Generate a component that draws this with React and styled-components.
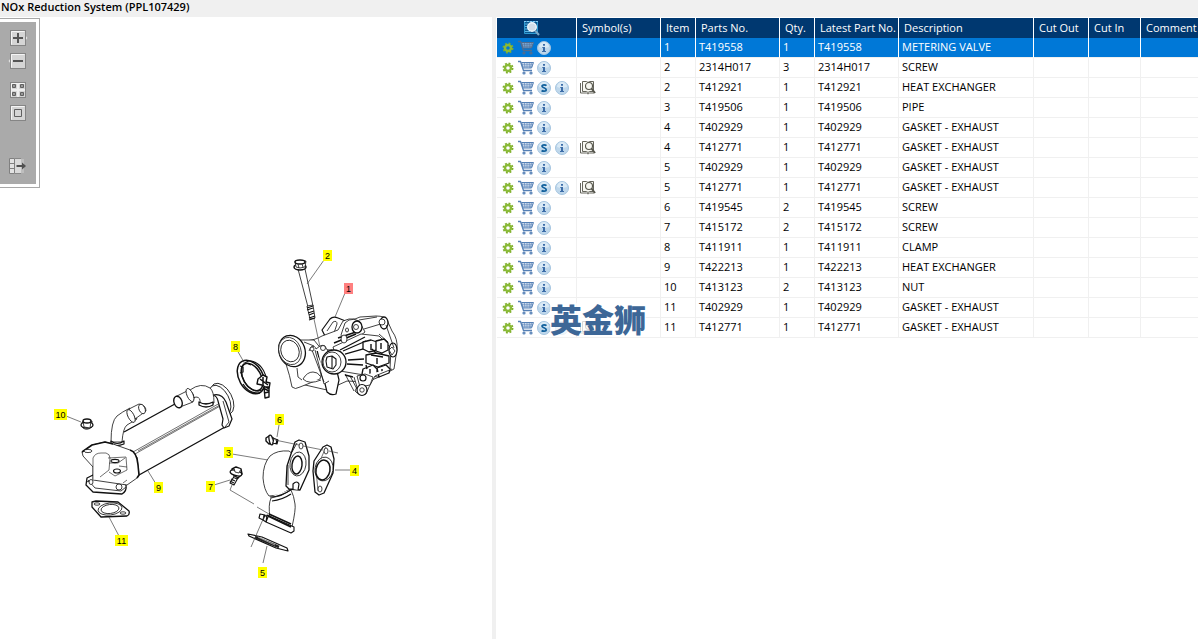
import React from 'react';
import styled, { createGlobalStyle } from 'styled-components';

const GlobalStyle = createGlobalStyle`
  * {
    box-sizing: border-box;
  }
  body {
    margin: 0;
    background: #fff;
    color: #000;
    font-family: 'Open Sans', 'Noto Sans', sans-serif;
    font-size: 11px;
  }
`;

const Page = styled.div`
  display: flex;
  flex-direction: column;
  height: 100vh;
  overflow: hidden;
`;
const TitleBar = styled.h1`
  flex: none;
  margin: 0;
  padding: 0 1px;
  height: 17px;
  line-height: 14px;
  font-size: 11px;
  font-weight: 600;
  background: #f0f0f0;
`;
const Panes = styled.main`
  display: flex;
  flex: 1;
  min-height: 0;
`;
const DrawingPane = styled.section`
  display: flex;
  align-items: flex-start;
  flex: 0 0 496px;
  border-right: 4px solid #f0f0f0;
`;
const Toolbar = styled.div`
  display: flex;
  flex-direction: column;
  flex: none;
  align-items: center;
  width: 40px;
  height: 170px;
  margin-top: 1px;
  padding: 6px 4px 0 0;
  background: #aaa;
  border: 1px solid #a8a8a8;
  border-left: 0;
  box-shadow: inset 0 3px #fff, inset -3px 0 #fff, inset 0 -3px #fff;
`;
const ToolButton = styled.button`
  display: block;
  width: 20px;
  height: 20px;
  margin: ${p => p.$gap || 3}px 0 0;
  padding: 0;
  border: 0;
  background: none;
  cursor: pointer;

  svg {
    display: block;
  }
`;
const Drawing = styled.svg`
  flex: none;
  width: 452px;
  height: 600px;
  font-family: 'Liberation Sans', Arial, sans-serif;
  font-size: 9px;
`;
const TablePane = styled.section`
  position: relative;
  flex: 1;
  min-width: 0;
  overflow: hidden;
  padding-left: 1px;
`;
const PartsTable = styled.table`
  width: 100%;
  min-width: 706px;
  margin-top: 1px;
  table-layout: fixed;
  border-collapse: separate;
  border-spacing: 0;
`;
const Col = styled.col`
  width: ${p => (p.$width ? `${p.$width}px` : 'auto')};
`;
const HeadCell = styled.th`
  height: 20px;
  padding: 0 0 1px 5px;
  border-right: 1px solid #fff;
  background: #003870;
  color: #fff;
  font-weight: 400;
  line-height: 18px;
  text-align: left;
  white-space: nowrap;

  svg {
    display: block;
    margin-left: 22px;
  }
`;
const Row = styled.tr`
  background: ${p => (p.$selected ? '#0078d7' : '#fff')};
  color: ${p => (p.$selected ? '#fff' : '#000')};
`;
const Cell = styled.td`
  height: 20px;
  padding: 0 0 2px 3px;
  border-right: 1px solid ${p => (p.$selected ? '#fff' : '#f0f0f0')};
  border-bottom: 1px solid #f0f0f0;
  line-height: 17px;
  white-space: nowrap;
`;
const IconCell = styled(Cell)`
  padding-bottom: 0;
`;
const IconRow = styled.div`
  display: flex;
  align-items: center;
  gap: 2px;
  height: 19px;
`;
const IconButton = styled.button`
  display: flex;
  align-items: center;
  justify-content: center;
  width: 16px;
  height: 16px;
  padding: 0;
  border: 0;
  background: none;
  cursor: pointer;
`;
const Watermark = styled.div`
  position: absolute;
  left: 54px;
  top: 286px;
  height: 32px;
  background: rgba(255, 255, 255, 0.75);
  color: #3d6797;
  font-family: 'Noto Sans CJK SC', sans-serif;
  font-size: 32px;
  font-weight: 900;
  line-height: 30px;
`;

const columns = [
  { label: '', width: 80 },
  { label: 'Symbol(s)', width: 84 },
  { label: 'Item', width: 35 },
  { label: 'Parts No.', width: 84 },
  { label: 'Qty.', width: 35 },
  { label: 'Latest Part No.', width: 84 },
  { label: 'Description', width: 135 },
  { label: 'Cut Out', width: 55 },
  { label: 'Cut In', width: 52 },
  { label: 'Comment' },
];

const parts = [
  ['1', 'T419558', '1', 'METERING VALVE'],
  ['2', '2314H017', '3', 'SCREW'],
  ['2', 'T412921', '1', 'HEAT EXCHANGER', true],
  ['3', 'T419506', '1', 'PIPE'],
  ['4', 'T402929', '1', 'GASKET - EXHAUST'],
  ['4', 'T412771', '1', 'GASKET - EXHAUST', true],
  ['5', 'T402929', '1', 'GASKET - EXHAUST'],
  ['5', 'T412771', '1', 'GASKET - EXHAUST', true],
  ['6', 'T419545', '2', 'SCREW'],
  ['7', 'T415172', '2', 'SCREW'],
  ['8', 'T411911', '1', 'CLAMP'],
  ['9', 'T422213', '1', 'HEAT EXCHANGER'],
  ['10', 'T413123', '2', 'NUT'],
  ['11', 'T402929', '1', 'GASKET - EXHAUST'],
  ['11', 'T412771', '1', 'GASKET - EXHAUST', true],
];

// label, left, top, fill
const callouts = [
  ['2', 323, 250],
  ['1', 344, 283, '#ff8080'],
  ['8', 231, 341],
  ['10', 54, 409],
  ['6', 275, 414],
  ['3', 224, 447],
  ['4', 350, 465],
  ['9', 154, 482],
  ['7', 206, 481],
  ['11', 115, 535],
  ['5', 258, 567],
];

function Gear() {
  return (
    <svg width="12" height="12" viewBox="0 0 12 12">
      <circle cx="6" cy="6" r="4.6" fill="none" stroke="#7fae2c" strokeWidth="1.8" strokeDasharray="1.9 1.71" />
      <circle cx="6" cy="6" r="3" fill="none" stroke="#8aba36" strokeWidth="2.4" />
    </svg>
  );
}

function Cart({ selected }) {
  return (
    <svg width="16" height="16" viewBox="0 0 16 16" fill="none" stroke={selected ? '#526c8d' : '#5580b5'}>
      <path d="M0 1.500h2.500l3 9H14" strokeWidth="1.300" />
      <path d="M3.500 2.500H15.500l-2 5.500H5z" fill={selected ? '#7fb0e0' : '#dce8f5'} />
      <path d="M4 4.300h11M4.500 6.200h10M6.300 2.500l.7 5.500M9 2.500V8M11.300 2.500V8M13.500 2.500 12.500 8" strokeWidth="0.600" />
      <circle cx="6" cy="13" r="1" strokeWidth="1.200" />
      <circle cx="13" cy="13" r="1" strokeWidth="1.200" />
    </svg>
  );
}

function Badge({ kind }) {
  return (
    <svg width="14" height="14" viewBox="0 0 14 14">
      <circle cx="7" cy="7" r="6.5" fill="#bed7eb" stroke="#a4c4df" />
      <path d="M2 6a5 5 0 0 1 10 0Q7 8 2 6z" fill="#d9e9f5" />
      {kind === 's' ? (
        <path
          d="M9.500 4.600C8.800 3.900 5 3.300 5 5.200 5 7 9.200 6.600 9.200 8.700 9.200 10.700 5.500 10.300 4.600 9.500"
          fill="none"
          stroke="#12609c"
          strokeWidth="1.700"
        />
      ) : (
        <path d="M6 3h2v1.700H6zM5.300 6H8v4h1v1H5v-1h1V7h-.7z" fill="#3c6ca8" />
      )}
    </svg>
  );
}

function BookSearch() {
  return (
    <svg width="16" height="15" viewBox="0 0 16 15" fill="none" stroke="#55554b">
      <path d="M2.500 1.500h4l1.500 1 1.500-1h4v10h-4L8 12.500l-1.500-1h-4z" fill="#f8f8f2" strokeWidth="0.900" />
      <path d="M.500 3v10h6l1.500 1 1.500-1H14" strokeWidth="0.900" />
      <circle cx="9" cy="6" r="3.500" fill="#f6f6f0" strokeWidth="1.100" />
      <path d="m11.500 8.500 3.500 4.500" strokeWidth="2" />
    </svg>
  );
}

function HeaderSearch() {
  return (
    <svg width="16" height="16" viewBox="0 0 16 16">
      <path d="M.500 1.500h13v12H.500z" fill="#0c5790" stroke="#2e9bd3" />
      <path d="M0 1.500h14" stroke="#8dcaf0" strokeDasharray="2 1" />
      <path d="M1 4h3M1 6.500h2M1 9h3M1 11.500h5" stroke="#5db6e6" />
      <circle cx="8" cy="7" r="4.300" fill="#d2dde8" stroke="#edf6fc" strokeWidth="1.400" />
      <path d="m11 10.500 4 4.500" stroke="#7ba8c8" strokeWidth="2" />
    </svg>
  );
}

function ToolIcon({ name }) {
  return (
    <svg width="20" height="20" viewBox="0 0 20 20" fill="none">
      {name !== 'export' && (
        <>
          {name === 'in' && <path d="m17 7 2.500 3-2.500 3z" fill="#e4e4e4" />}
          {name === 'out' && <path d="m3 7-2.500 3 2.500 3z" fill="#e4e4e4" />}
          <rect x="2.500" y="2.500" width="15" height="15" fill="#d5d5d5" stroke="#858585" />
          <path d="M3.500 16.500v-13h13" stroke="#f5f5f5" />
        </>
      )}
      {name === 'in' && <path d="M5 10h10M10 5v10" stroke="#555" strokeWidth="2" />}
      {name === 'out' && <path d="M5 10h10" stroke="#555" strokeWidth="2" />}
      {name === 'grid' && (
        <>
          <path d="M10 3v14M3 10h14" stroke="#eee" strokeWidth="2" />
          <path d="M4.500 4.500h3v3h-3zM12.500 4.500h3v3h-3zM4.500 12.500h3v3h-3zM12.500 12.500h3v3h-3z" fill="#999" stroke="#606060" />
        </>
      )}
      {name === 'fit' && <path d="M6.500 6.500h7v7h-7z" stroke="#606060" />}
      {name === 'export' && (
        <>
          <path d="M1.500 2.500h5v15h-5z" fill="#e2e2e2" stroke="#808080" />
          <path d="M2 7.500h4M2 12.500h4" stroke="#808080" />
          <path d="M7 2.500h6M7 17.500h6" stroke="#888" />
          <path d="M7 3h6v14H7z" fill="#dadada" />
          <path d="M13 3h3v14h-3z" fill="#bebebe" />
          <path d="M8.500 10h7" stroke="#505050" strokeWidth="2" />
          <path d="m14 6.500 4 3.500-4 3.500z" fill="#505050" />
        </>
      )}
    </svg>
  );
}

function Bolt() {
  return (
    <g fill="#fff">
      <path d="m298 269 10 38 5-1-8-37z" />
      <path d="m307 306 3 13 5-1-2-13z" />
      <path d="m307 308 6-2m-6 4 6-2m-5 5 6-2m-5 4 5-2m-5 5 6-2m-6 4 6-2" strokeWidth="1.100" />
      <ellipse cx="300" cy="267" rx="6" ry="3" strokeWidth="1.500" />
      <path d="m295 261 1 6 4 1 5-1 1-6z" />
      <ellipse cx="300" cy="262" rx="5" ry="2" strokeWidth="1.400" />
      <path d="m298 264 1 4m3-4 1 3" />
    </g>
  );
}

function MeteringValve() {
  return (
    <g fill="#fff">
      <path d="m322 330 8-11q3-3 8-1l10 4-4 14-18 2z" strokeWidth="1.200" />
      <path d="m327 331 6-9q4-2 4 2l-3 9" />
      <path d="M302 341q12 0 20-5l16-6 5-9q6-3 12-2l5-2 16-1q9 0 11 4l5 11q6 8 5 18l-3 20-15 8-12 5-20-1-20 9-35-8-6-26z" />
      <path d="m341 335 4-12 4-3q5-2 10 1l6 11-9 7-12 4zM364 329l20-6M359 320l18-3" />
      <path d="M286 364q4 12 6 23 3 3 8 0l20-8 6-24-12-15h-16z" />
      <path d="M303 379q4-7 10-7 5 0 7 4M303 379q6 6 18 1M297 368l1 9 4 3M304 342l10 4" />
      <path d="m317 350 10 42q4 4 9 2l3-14-7-30z" strokeWidth="1.200" />
      <path d="m312 350 12 32M315 350l9 34 5-3M309 351l2-4q4-2 5 2l4-3q5-2 6 2l2 3" />
      <circle cx="312" cy="349" r="2" />
      <circle cx="323" cy="348" r="2.500" />
      <path d="m333 347 28-13 18 2 12 12-1 21-12 8-20-3-18-3z" />
      <path d="m340 350 25-13m-22 14 23-10m-21 13 21-6m-18 12 16-1m-17 5 16 1" strokeWidth="1.300" />
      <path d="m334 343 22-9m-18 4 18-6M345 375l8 2" strokeWidth="1.500" />
      <ellipse cx="292" cy="351" rx="13" ry="16" transform="rotate(-20 292 351)" strokeWidth="1.300" />
      <ellipse cx="290" cy="351" rx="11" ry="14" transform="rotate(-20 290 351)" strokeWidth="0.700" />
      <ellipse cx="290" cy="351" rx="9" ry="11" transform="rotate(-20 290 351)" />
      <circle cx="334" cy="362" r="12" strokeWidth="1.300" />
      <ellipse cx="332" cy="362" rx="9" ry="10" />
      <path d="m327 357 5-1 4 3v6l-3 4-6-2-1-6zm5-1v12" strokeWidth="1.100" />
      <ellipse cx="357" cy="327" rx="5" ry="6" strokeWidth="1.300" />
      <circle cx="356" cy="327" r="2.500" />
      <ellipse cx="347" cy="330" rx="1.500" ry="2" />
      <ellipse cx="344" cy="339" rx="3" ry="4" />
      <ellipse cx="384" cy="323" rx="4" ry="6" strokeWidth="1.300" />
      <circle cx="382" cy="322" r="3" />
      <ellipse cx="393" cy="350" rx="4" ry="7" strokeWidth="1.200" />
      <path d="m389 350 3-3 3 4-3 4zM386 325l8 23M379 334l9 8" />
      <path d="m363 342 8-2 6 2v8l-8 2-6-3z" strokeWidth="1.300" />
      <path d="m376 341 8-2 4 4v7l-6 3-6-2zM366 355l10-2 13 3v7l-11 4-12-4z" strokeWidth="1.300" />
      <path d="m363 369 10-4 4 4v5l-10 3-5-3zm14-1 9-3 4 4-1 4-10 4z" strokeWidth="1.300" />
      <path d="M371 344v6m10-7v6m-4 9v6m-6-9 12 2M370 369v6m12-6v4m-10-24 4 4m-10 12 1 4" strokeWidth="1.400" />
      <path d="m354 377 3 10-2 4q4 5 11 3l3-7 6-11 17-7M345 374l9 17M350 376l7 13" />
      <path d="m357 376 8-2 8 3-3 8-10 2z" />
      <circle cx="363" cy="378" r="3" strokeWidth="1.200" />
      <ellipse cx="362" cy="390" rx="5" ry="5.500" strokeWidth="1.200" />
      <circle cx="362" cy="390" r="2.200" />
    </g>
  );
}

function Clamp() {
  return (
    <g fill="none">
      <ellipse cx="251" cy="377" rx="12" ry="18" transform="rotate(-30 251 377)" strokeWidth="1.500" />
      <ellipse cx="254" cy="376" rx="11" ry="16" transform="rotate(-30 254 376)" strokeWidth="1.100" />
      <ellipse cx="252" cy="377" rx="9" ry="15" transform="rotate(-30 252 377)" strokeWidth="1.500" />
      <path d="m240 366 3 1v5l-3 1M246 363l5 2M243 384q6 10 17 9" strokeWidth="1.300" />
      <path d="m258 379 5-4 4 2-1 5 4 1-1 6-7-4-5-1zM264 387l1 11 4-1v-10z" fill="#fff" strokeWidth="1.400" />
      <path d="m260 379 8 6m-5-8v9m0 2 6 3m-5 2 5-1" strokeWidth="1.500" />
    </g>
  );
}

function Cooler() {
  return (
    <g fill="#fff">
      <ellipse cx="222" cy="399" rx="10" ry="17" transform="rotate(-28 222 399)" />
      <ellipse cx="220" cy="400" rx="9" ry="16" transform="rotate(-28 220 400)" />
      <path d="m124 431 90-43q9 3 13 17l4 16-6 7-86 48-32-32z" stroke="none" />
      <path d="m124 432 60-33M139 475l86-48" strokeWidth="1.400" />
      <path d="m133 452 87-49m-85 51 87-49m-84 46 82-46" strokeWidth="0.600" />
      <path d="M213 395q9-2 13 7l6 17-3 7-5 2-2-3 1-6-5-18q-1-5-5-6z" strokeWidth="1.200" />
      <path d="m223 401 6 21-4 5" />
      <path d="M111 442q0-21 6-26 5-4 13-8l7 11-10 6q-4 3-5 17z" />
      <path d="m129 409 10-5q7 1 7 7l-11 8z" />
      <ellipse cx="142" cy="409" rx="3" ry="5" transform="rotate(-24 142 409)" />
      <ellipse cx="131" cy="416" rx="3" ry="7" transform="rotate(-27 131 416)" />
      <path d="M111 441q6 5 13 0v3q-8 3-13 0z" strokeWidth="1.200" />
      <path d="M190 390q11-8 20-2 4 3 4 15l-14 1q1-7-4-7l-3 1z" />
      <path d="m175 397 14-7q7 4 4 12l-13 5z" />
      <ellipse cx="178" cy="402" rx="4" ry="6" transform="rotate(-20 178 402)" strokeWidth="1.400" />
      <ellipse cx="190" cy="395" rx="3" ry="7" transform="rotate(-24 190 395)" />
      <path d="M199 402q7 4 14 0v3q-7 4-14 0z" strokeWidth="1.300" />
      <path d="M87 478l-1 7 7 7 14 1 15 1q5-3 4-9l-8-9-25-1z" strokeWidth="1.300" />
      <path d="m88 480 7 8 26 3 5-4M86 482l4-1" />
      <path d="m82 452 10-7 13-3 8 2 17 6 7 7 2 18-2 3-10 7-34-5v-13l-10-11z" />
      <path d="m82 452 10-7 13-3 8 2M130 450q7 2 8 15l1 10-2 3" strokeWidth="1.600" />
      <path d="M93 480v-22q2-5 8-5h5q4 1 4 5l-1 12-9 7M108 458l18-1 1 13-12 6-6-4" strokeWidth="0.600" />
      <path d="M109 463h9l7-5m-6 8 8 1m-4 16 4-3" strokeWidth="0.600" />
      <ellipse cx="88" cy="451" rx="4" ry="1.600" />
      <ellipse cx="115" cy="461" rx="4" ry="1.600" strokeWidth="1.100" />
      <ellipse cx="117" cy="471" rx="3.500" ry="2" strokeWidth="1.100" />
      <ellipse cx="91" cy="482" rx="2" ry="2.500" />
      <ellipse cx="119" cy="487" rx="3" ry="3" />
      <path d="m92 502 4-1 22 1 11 9q1 4-2 5l-26 1-9-10z" strokeWidth="1.300" />
      <ellipse cx="110" cy="509" rx="12" ry="6" transform="rotate(-7 110 509)" />
      <ellipse cx="110" cy="509" rx="9" ry="4.500" transform="rotate(-7 110 509)" />
      <ellipse cx="97" cy="504" rx="3" ry="1.200" />
      <ellipse cx="123" cy="513" rx="3" ry="1.200" />
      <path d="m82 422 1 6q4 3 9-1v-6z" />
      <ellipse cx="87" cy="425" rx="6" ry="3" strokeWidth="1.300" />
      <path d="m83 421 1 6 6 1 1-7z" />
      <ellipse cx="87" cy="421" rx="4" ry="2" strokeWidth="1.400" />
    </g>
  );
}

function Pipe() {
  return (
    <g fill="#fff">
      <path d="M289 451q-12-1-19 5-7 8-7 22 1 12 6 18l10-1 13-7 6-30z" />
      <path d="M271 498q-3 7-1 19l22 10q4-18 3-23-1-8-4-14-10 7-20 8z" />
      <path d="M270 497q11 0 22-8m-20 12q10-1 19-7" strokeWidth="1.200" />
      <path d="m295 442 4-2 6 2 4 14v14l-9 20-11-1-3-3 1-20z" strokeWidth="1.300" />
      <path d="m292 452 5-9m-9 22v20" />
      <ellipse cx="298" cy="464" rx="8" ry="12" transform="rotate(7 298 464)" />
      <ellipse cx="297" cy="465" rx="5" ry="9" transform="rotate(7 297 465)" strokeWidth="1.400" />
      <ellipse cx="301" cy="446" rx="2" ry="3" />
      <path d="M293 489v-5q4-4 6 0l-1 6" strokeWidth="1.200" />
      <path d="m267 515 27 12v4l-3 2-25-11zM260 514l5 1-2 5-4-2zM264 515l4 2-2 5-3-2z" strokeWidth="1.100" />
      <path d="m268 516 23 11m-22-13 22 10" strokeWidth="1.600" />
      <path d="m323 447 4-2 4 2 3 12-1 14-9 20-5 2-4-3-2-21 1-10z" strokeWidth="1.300" />
      <path d="m326 447-10 23 2 21" strokeWidth="0.600" />
      <ellipse cx="324" cy="469" rx="9" ry="12" transform="rotate(10 324 469)" />
      <ellipse cx="323" cy="470" rx="7" ry="10" transform="rotate(10 323 470)" strokeWidth="1.500" />
      <ellipse cx="326" cy="451" rx="2" ry="3" />
      <ellipse cx="320" cy="489" rx="2" ry="3" />
      <path d="m248 534 14 3 25 11 1 3-12-3-27-12z" strokeWidth="1.200" />
      <path d="m255 537 24 10" stroke="#222" strokeWidth="2.600" />
      <path d="m258 537 17 8" stroke="#ccc" strokeWidth="0.700" />
      <path d="m266 438 3-2 4 2v5l-4 1-3-3z" strokeWidth="1.400" />
      <ellipse cx="271" cy="440" rx="1.800" ry="5" transform="rotate(-12 271 440)" strokeWidth="1.300" />
      <path d="m273 438 5 2-1 4-5-1m2-5-1 5m4-4-1 5" strokeWidth="1.100" />
      <path d="m235 475-5 8 4 2 5-9m-6 1 4 2m-6 0 4 2m-5 0 4 2" strokeWidth="1.100" />
      <path d="m232 469 4-2 5 2 1 5-4 4-6-4z" strokeWidth="1.400" />
      <ellipse cx="236" cy="473" rx="6" ry="2.500" transform="rotate(16 236 473)" strokeWidth="1.300" />
      <path d="m234 468 1 4 4 1 2-4" />
    </g>
  );
}

function Leaders() {
  return (
    <path
      d="m324 260-17 24m38 9-10 24M314 319l6 28M237 350l8 14M66 416l15 6m198 3-2 12m-2 3 24 5m4 1 20 4m6 1 9 2M232 454l36 6m67 10h15m-194 14-8-13m66 14 16-5M119 536l-10-19m123-32-2 5 24 14m3 3 12 7m-5 3-13 30m12 16 4-17"
      fill="none"
      stroke="#444"
      strokeWidth="0.700"
    />
  );
}

function PartDrawing() {
  return (
    <Drawing viewBox="40 17 452 600" role="img" aria-label="NOx Reduction System">
      <g stroke="#111" strokeWidth="0.800" strokeLinejoin="round">
        <MeteringValve />
        <Bolt />
        <Clamp />
        <Cooler />
        <Pipe />
        <Leaders />
      </g>
      {callouts.map(([label, x, y, fill]) => {
        const width = label.length > 1 ? 13 : 9;
        return (
          <g key={label}>
            <rect x={x} y={y} width={width} height="11" fill={fill || '#ff0'} />
            <text x={x + width / 2} y={y + 9} textAnchor="middle">{label}</text>
          </g>
        );
      })}
    </Drawing>
  );
}

function PartRow({ part, selected }) {
  const [item, number, qty, description, superseded] = part;

  return (
    <Row $selected={selected}>
      <IconCell $selected={selected}>
        <IconRow>
          <IconButton aria-label="Options"><Gear /></IconButton>
          <IconButton aria-label="Add to cart"><Cart selected={selected} /></IconButton>
          {superseded && <IconButton aria-label="Supersession"><Badge kind="s" /></IconButton>}
          <IconButton aria-label="Information"><Badge kind="i" /></IconButton>
        </IconRow>
      </IconCell>
      <IconCell $selected={selected}>
        <IconRow>{superseded && <BookSearch />}</IconRow>
      </IconCell>
      <Cell $selected={selected}>{item}</Cell>
      <Cell $selected={selected}>{number}</Cell>
      <Cell $selected={selected}>{qty}</Cell>
      <Cell $selected={selected}>{number}</Cell>
      <Cell $selected={selected}>{description}</Cell>
      <Cell $selected={selected} />
      <Cell $selected={selected} />
      <Cell $selected={selected} />
    </Row>
  );
}

export default function App() {
  return (
    <Page>
      <GlobalStyle />
      <TitleBar>NOx Reduction System (PPL107429)</TitleBar>
      <Panes>
        <DrawingPane>
          <Toolbar>
            <ToolButton aria-label="Zoom in"><ToolIcon name="in" /></ToolButton>
            <ToolButton aria-label="Zoom out"><ToolIcon name="out" /></ToolButton>
            <ToolButton aria-label="Tile" $gap={9}><ToolIcon name="grid" /></ToolButton>
            <ToolButton aria-label="Fit"><ToolIcon name="fit" /></ToolButton>
            <ToolButton aria-label="Hide list" $gap={33}><ToolIcon name="export" /></ToolButton>
          </Toolbar>
          <PartDrawing />
        </DrawingPane>
        <TablePane>
          <PartsTable>
            <colgroup>
              {columns.map(c => <Col key={c.label} $width={c.width} />)}
            </colgroup>
            <thead>
              <tr>
                {columns.map(c => (
                  <HeadCell key={c.label}>{c.label || <HeaderSearch />}</HeadCell>
                ))}
              </tr>
            </thead>
            <tbody>
              {parts.map((part, i) => (
                <PartRow key={part[0] + part[1]} part={part} selected={i === 0} />
              ))}
            </tbody>
          </PartsTable>
          <Watermark>英金狮</Watermark>
        </TablePane>
      </Panes>
    </Page>
  );
}
